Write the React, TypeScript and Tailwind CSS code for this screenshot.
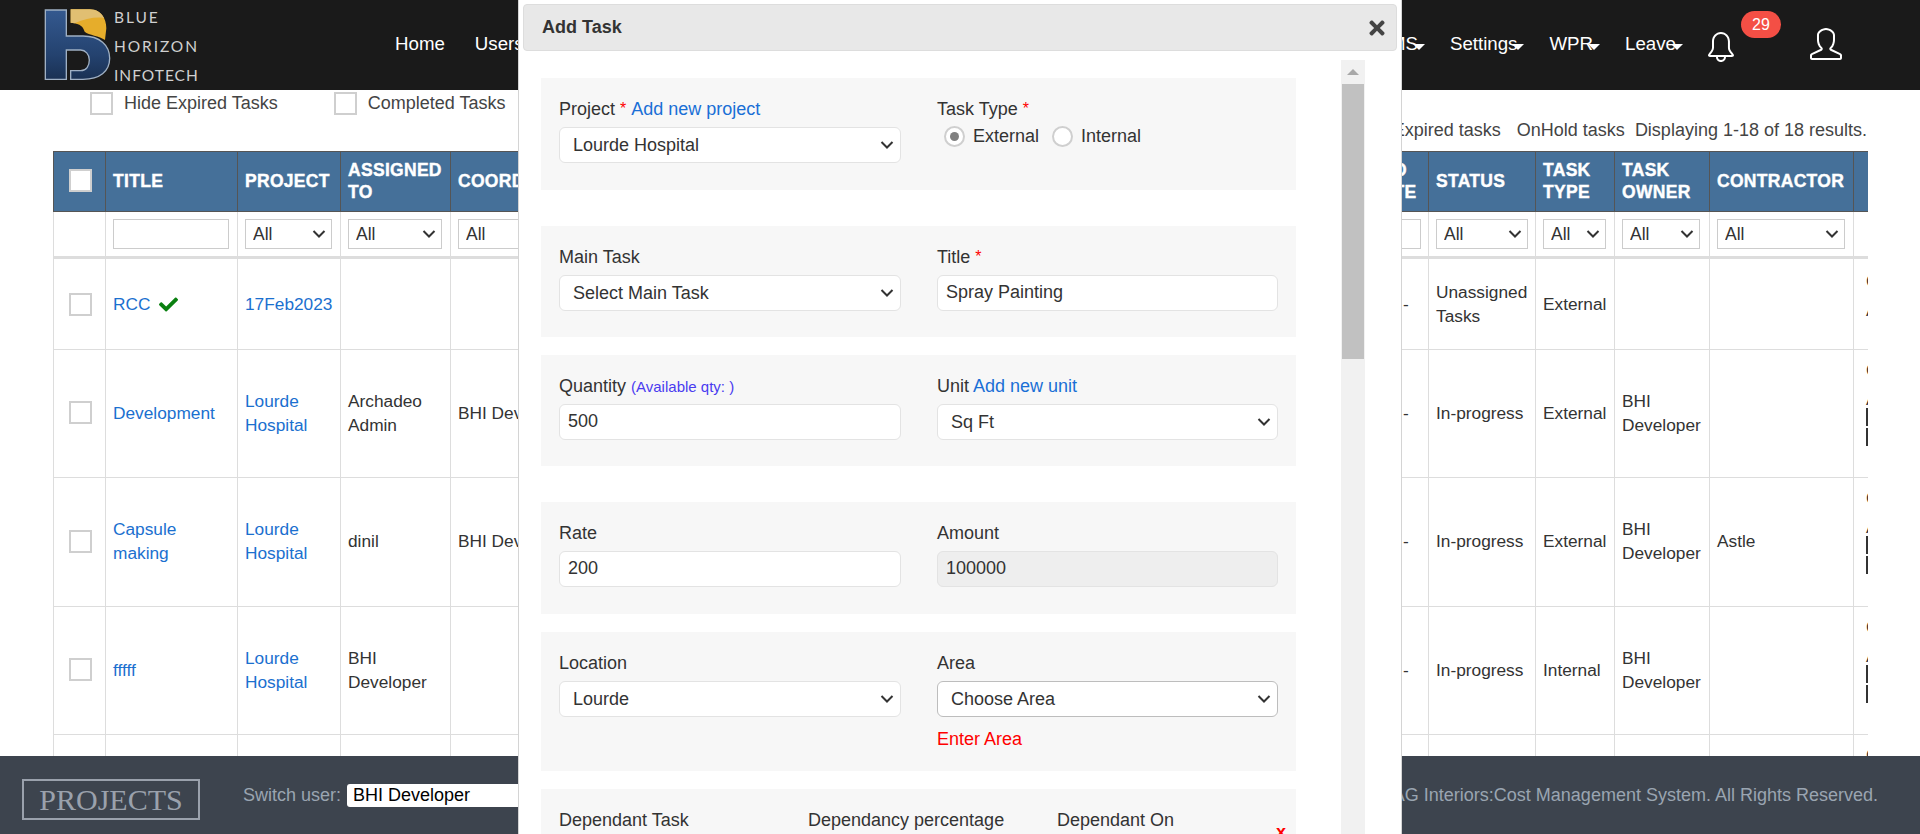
import React from "react";
import { SlBell, SlUser } from "react-icons/sl";
import { FaCheck, FaTimes } from "react-icons/fa";

const HIDDEN_NAV = ["Tasks", "Projects", "Reports", "Contractors", "Materials", "Billing", "Finance"];

const COLUMNS = [
  { label: "", width: "w-[52px]" },
  { label: "TITLE", width: "w-[132px]" },
  { label: "PROJECT", width: "w-[103px]" },
  { label: "ASSIGNED TO", width: "w-[110px]" },
  { label: "COORDINATOR", width: "w-[170px]" },
  { label: "QUANTITY", width: "w-[120px]" },
  { label: "RATE", width: "w-[100px]" },
  { label: "AMOUNT", width: "w-[121px]" },
  { label: "LOCATION", width: "w-[200px]" },
  { label: "START DATE", width: "w-[200px]" },
  { label: "END DATE", width: "w-[67px]" },
  { label: "STATUS", width: "w-[107px]" },
  { label: "TASK TYPE", width: "w-[79px]" },
  { label: "TASK OWNER", width: "w-[95px]" },
  { label: "CONTRACTOR", width: "w-[144px]" },
  { label: "", width: "w-[120px]" },
];

const ROWS = [
  { h: "h-[92px]", title: "RCC", done: true, project: "17Feb2023", assigned: "", coord: "", status: "Unassigned Tasks", type: "External", owner: "", contractor: "", buttons: false },
  { h: "h-[128px] [&>td]:pb-[2px]", title: "Development", project: "Lourde Hospital", assigned: "Archadeo Admin", coord: "BHI Developer", status: "In-progress", type: "External", owner: "BHI Developer", contractor: "", buttons: true },
  { h: "h-[129px] [&>td]:pb-[2px]", title: "Capsule making", project: "Lourde Hospital", assigned: "dinil", coord: "BHI Developer", status: "In-progress", type: "External", owner: "BHI Developer", contractor: "Astle", buttons: true },
  { h: "h-[128px] [&>td]:pb-[2px]", title: "fffff", project: "Lourde Hospital", assigned: "BHI Developer", coord: "", status: "In-progress", type: "Internal", owner: "BHI Developer", contractor: "", buttons: true },
  { h: "h-[128px] [&>td]:pb-[2px]", title: "Plumbing", project: "Lourde Hospital", assigned: "BHI Developer", coord: "", status: "In-progress", type: "External", owner: "BHI Developer", contractor: "", buttons: true },
];

const Box: React.FC = () => (
  <span className="block w-[23px] h-[23px] bg-white border-2 border-[#cfcfcf]" />
);

const Chevron: React.FC<{ className: string }> = ({ className }) => (
  <svg width="14" height="9" viewBox="0 0 14 9" fill="none" className={`absolute top-1/2 -translate-y-1/2 pointer-events-none ${className}`}>
    <path d="M1.5 1.5 L7 7 L12.5 1.5" stroke="#333" strokeWidth="2" />
  </svg>
);

const NavItem: React.FC<{ label: string; caret?: boolean }> = ({ label, caret }) => (
  <span className="flex items-center text-[18.7px] text-white whitespace-nowrap">
    {label}
    {caret && <span className="block -ml-[5px] mt-[6px] w-0 h-0 border-x-[6px] border-x-transparent border-t-[6px] border-t-white" />}
  </span>
);

const Logo: React.FC = () => (
  <div className="flex items-center ml-[43px] w-[162px] shrink-0">
    <svg width="70" height="74" viewBox="125 24 210 222" className="shrink-0">
      <defs>
        <linearGradient id="logoBlue" x1="0" y1="0" x2="0" y2="1">
          <stop offset="0" stopColor="#34598f" />
          <stop offset="0.65" stopColor="#24426f" />
          <stop offset="1" stopColor="#1a3153" />
        </linearGradient>
      </defs>
      <path
        d="M132 30 H195 V108 H245 C295 108 325 135 325 175 C325 215 295 238 245 238 H208 V212 H238 C255 212 264 198 264 180 C264 163 252 150 238 150 H195 V238 H132 Z"
        fill="url(#logoBlue)"
        stroke="#9fb0c4"
        strokeWidth="4"
      />
      <path d="M208 28 H265 C298 28 315 55 315 85 L311 120 C295 108 262 105 250 95 C245 80 240 72 208 68 Z" fill="#e6ad2b" />
      <path d="M208 28 H265 C285 28 300 38 308 54 C285 50 250 56 220 70 L208 68 Z" fill="#e1bf72" />
    </svg>
    <div className="ml-[1px] mt-[2px] flex flex-col font-['Lato',sans-serif] text-[15.5px] leading-[29px] tracking-[1.9px] text-[#d0d0d0]">
      <span>BLUE</span>
      <span>HORIZON</span>
      <span className="tracking-[1px]">INFOTECH</span>
    </div>
  </div>
);

const Header: React.FC = () => (
  <header className="h-[90px] shrink-0 bg-[#1a1a1a] flex items-center">
    <Logo />
    <nav className="flex items-center gap-[30px] ml-[190px] pb-[2px]">
      <NavItem label="Home" />
      <NavItem label="Users" caret />
      {HIDDEN_NAV.map((n) => (
        <NavItem key={n} label={n} caret />
      ))}
    </nav>
    <div className="ml-auto flex items-center pr-[78px]">
      <div className="flex items-center gap-[25px] pb-[2px]">
        <NavItem label="CMS" caret />
        <NavItem label="Settings" caret />
        <NavItem label="WPR" caret />
        <NavItem label="Leave" caret />
      </div>
      <div className="relative ml-[23px] mt-[4px]">
        <SlBell size={30} color="#fff" />
        <span className="absolute -top-[21px] left-[35px] w-[40px] h-[27px] rounded-[14px] bg-[#f44f45] text-white text-[16px] flex items-center justify-center">
          29
        </span>
      </div>
      <SlUser size={32} color="#fff" className="ml-[74px] -mt-[3px]" />
    </div>
  </header>
);

const Toolbar: React.FC = () => (
  <div className="h-[61px] text-[#444]">
    <div className="h-[26px] flex items-center pl-[90px]">
      <Box />
      <span className="ml-[11px]">Hide Expired Tasks</span>
      <span className="ml-[56px]"><Box /></span>
      <span className="ml-[11px]">Completed Tasks</span>
    </div>
    <div className="h-[28px] flex items-center justify-end pr-[53px]">
      <span>Expired tasks</span>
      <span className="ml-[16px]">OnHold tasks</span>
      <span className="ml-[10px]">Displaying 1-18 of 18 results.</span>
    </div>
  </div>
);

const FilterSelect: React.FC<{ className: string }> = ({ className }) => (
  <span className={`relative block ${className}`}>
    <select className="appearance-none block w-full h-[30px] border border-[#ccc] bg-white pl-[7px] text-[#333] text-[17.5px]">
      <option>All</option>
    </select>
    <Chevron className="right-[6px]" />
  </span>
);

const FILTER_WIDTHS: Record<string, string> = {
  PROJECT: "w-[87px]",
  "ASSIGNED TO": "w-[94px]",
  COORDINATOR: "w-[150px]",
  STATUS: "w-[92px]",
  "TASK TYPE": "w-[63px]",
  "TASK OWNER": "w-[78px]",
  CONTRACTOR: "w-[128px]",
};

const ActionsCell: React.FC<{ buttons: boolean }> = ({ buttons }) => (
  <div className={`flex flex-col items-start leading-[29px] text-[#333] ${buttons ? "" : "mt-[2px]"}`}>
    <span>Copy</span>
    <span>Assign</span>
    {buttons && (
      <>
        <span className="block border-2 border-[#333] h-[18px] w-[60px] -mt-[6px]" />
        <span className="block border-2 border-[#333] h-[18px] w-[60px] mt-[2px]" />
      </>
    )}
  </div>
);

const TaskTable: React.FC = () => (
  <div className="ml-[53px] w-[1815px] overflow-hidden">
    <table className="table-fixed border-collapse w-[1920px] text-[17.3px]">
      <colgroup>
        {COLUMNS.map((c, i) => (
          <col key={i} className={c.width} />
        ))}
      </colgroup>
      <thead>
        <tr className="h-[60px] bg-[#457099] text-white">
          {COLUMNS.map((c, i) => (
            <th key={i} className="border border-[#555] px-[7px] pb-[2px] text-left text-[17.5px] font-bold leading-[22px] tracking-[0.3px] [-webkit-text-stroke:0.4px_white]">
              {i === 0 ? <span className="ml-[8px] block w-fit"><Box /></span> : c.label}
            </th>
          ))}
        </tr>
        <tr className="h-[46px]">
          {COLUMNS.map((c, i) => (
            <td key={i} className="border border-[#ddd] border-b-[3px] px-[7px]">
              {c.label === "TITLE" && <input className="w-[116px] h-[30px] border border-[#ccc]" />}
              {c.label === "END DATE" && <input className="w-[52px] h-[30px] border border-[#ccc]" />}
              {FILTER_WIDTHS[c.label] && <FilterSelect className={FILTER_WIDTHS[c.label]} />}
            </td>
          ))}
        </tr>
      </thead>
      <tbody className="text-[#333] leading-[24px]">
        {ROWS.map((r, i) => (
          <tr key={i} className={r.h}>
            <td className="border border-[#ddd]">
              <span className="ml-[15px] block w-fit"><Box /></span>
            </td>
            <td className="border border-[#ddd] px-[7px] text-[#1b70cf]">
              <span className="flex items-center gap-[9px] flex-wrap">
                <span className="max-w-[90px]">{r.title}</span>
                {r.done && <FaCheck size={19} color="#0a8010" />}
              </span>
            </td>
            <td className="border border-[#ddd] px-[7px] text-[#1b70cf]">{r.project}</td>
            <td className="border border-[#ddd] px-[7px]">{r.assigned}</td>
            <td className="border border-[#ddd] px-[7px]">{r.coord}</td>
            <td className="border border-[#ddd]" />
            <td className="border border-[#ddd]" />
            <td className="border border-[#ddd]" />
            <td className="border border-[#ddd]" />
            <td className="border border-[#ddd]" />
            <td className="border border-[#ddd] pl-[41px]">-</td>
            <td className="border border-[#ddd] px-[7px]">{r.status}</td>
            <td className="border border-[#ddd] px-[7px]">{r.type}</td>
            <td className="border border-[#ddd] px-[7px]">{r.owner}</td>
            <td className="border border-[#ddd] px-[7px]">{r.contractor}</td>
            <td className="border border-[#ddd] pl-[12px] pt-[6px] align-top">
              <ActionsCell buttons={r.buttons} />
            </td>
          </tr>
        ))}
      </tbody>
    </table>
  </div>
);

const Footer: React.FC = () => (
  <footer className="h-[78px] shrink-0 bg-[#3d444e] flex items-center pl-[22px] pr-[42px] text-[#9aa5b1]">
    <span className="h-[41px] w-[178px] border-2 border-[#9aa1ac] flex items-center justify-center font-['Liberation_Serif',serif] text-[30px] text-[#9aa1ac] mt-[9px]">
      PROJECTS
    </span>
    <span className="ml-[43px]">Switch user:</span>
    <select className="ml-[6px] pl-[2px] w-[189px] h-[23px] bg-white text-black rounded-[3px]">
      <option>BHI Developer</option>
    </select>
    <span className="ml-auto">© 2023 AG Interiors:Cost Management System. All Rights Reserved.</span>
  </footer>
);

const Req: React.FC = () => <span className="ml-[5px] mr-[1px] text-[#f00] text-[16px] align-top">*</span>;
const AddLink: React.FC<{ children: React.ReactNode }> = ({ children }) => (
  <span className="text-[#1a6fd6]">{children}</span>
);

const Label: React.FC<{ children: React.ReactNode }> = ({ children }) => (
  <label className="block h-[24px] leading-[24px] mb-[6px] text-[#333]">{children}</label>
);

const FIELD = "block w-full h-[36px] rounded-[6px] border text-[#333]";

const SelectField: React.FC<{ value: string; strong?: boolean }> = ({ value, strong }) => (
  <span className="relative block">
    <select className={`appearance-none ${FIELD} bg-white pl-[13px] ${strong ? "border-[#bdbdbd]" : "border-[#e3e3e3]"}`}>
      <option>{value}</option>
    </select>
    <Chevron className="right-[7px]" />
  </span>
);

const TextField: React.FC<{ value: string; disabled?: boolean }> = ({ value, disabled }) => (
  <input
    readOnly
    defaultValue={value}
    className={`${FIELD} px-[8px] pb-[2px] border-[#e3e3e3] ${disabled ? "bg-[#eee]" : "bg-white"}`}
  />
);

const Section: React.FC<{ className: string; children: React.ReactNode }> = ({ className, children }) => (
  <section className={`${className} bg-[#f7f7f7] px-[18px] pt-[19px] grid grid-cols-[342px_341px] gap-x-[36px] content-start`}>
    {children}
  </section>
);

const Radio: React.FC<{ checked?: boolean; label: string }> = ({ checked, label }) => (
  <span className="flex items-center">
    <span className="w-[21px] h-[21px] rounded-full bg-white border-2 border-[#cfcfcf] flex items-center justify-center">
      {checked && <span className="w-[9px] h-[9px] rounded-full bg-[#808080]" />}
    </span>
    <span className="ml-[8px] text-[#333]">{label}</span>
  </span>
);

const TaskModal: React.FC = () => (
  <div className="absolute top-0 left-[518px] w-[884px] h-[834px] bg-white border-x border-[#d4d4d4] overflow-hidden px-[4px] pt-[4px]">
    <div className="h-[47px] rounded-[4px] bg-[#e8e8e8] border border-[#ddd] flex items-center justify-between pl-[18px] pr-[8px]">
      <span className="font-bold text-[#333]">Add Task</span>
      <FaTimes size={22} color="#444" />
    </div>
    <div className="flex items-start">
      <div className="ml-[18px] w-[755px] shrink-0 pt-[27px] flex flex-col">
        <Section className="h-[112px]">
          <div>
            <Label>Project<Req /> <AddLink>Add new project</AddLink></Label>
            <SelectField value="Lourde Hospital" />
          </div>
          <div>
            <Label>Task Type<Req /></Label>
            <div className="flex items-center gap-[13px] pl-[7px] -mt-[4px]">
              <Radio checked label="External" />
              <Radio label="Internal" />
            </div>
          </div>
        </Section>
        <Section className="h-[111px] mt-[36px]">
          <div>
            <Label>Main Task</Label>
            <SelectField value="Select Main Task" />
          </div>
          <div>
            <Label>Title<Req /></Label>
            <TextField value="Spray Painting" />
          </div>
        </Section>
        <Section className="h-[111px] mt-[18px]">
          <div>
            <Label>Quantity <span className="text-[15px] text-[#4a3cf0]">(Available qty: )</span></Label>
            <TextField value="500" />
          </div>
          <div>
            <Label>Unit <AddLink>Add new unit</AddLink></Label>
            <SelectField value="Sq Ft" />
          </div>
        </Section>
        <Section className="h-[112px] mt-[36px]">
          <div>
            <Label>Rate</Label>
            <TextField value="200" />
          </div>
          <div>
            <Label>Amount</Label>
            <TextField value="100000" disabled />
          </div>
        </Section>
        <Section className="h-[139px] mt-[18px]">
          <div>
            <Label>Location</Label>
            <SelectField value="Lourde" />
          </div>
          <div>
            <Label>Area</Label>
            <SelectField value="Choose Area" strong />
            <p className="mt-[10px] text-[#f00] leading-[24px]">Enter Area</p>
          </div>
        </Section>
        <section className="mt-[18px] h-[120px] bg-[#f7f7f7] px-[18px] pt-[18px] flex text-[#333] relative">
          <span className="w-[249px]">Dependant Task</span>
          <span className="w-[249px]">Dependancy percentage</span>
          <span>Dependant On</span>
          <span className="absolute left-[735px] top-[30px] text-[#f00] font-bold">x</span>
        </section>
      </div>
      <div className="ml-[45px] mt-[9px] w-[24px] h-[800px] bg-[#f1f1f1] shrink-0 flex flex-col items-center">
        <span className="block mt-[9px] w-0 h-0 border-x-[6px] border-x-transparent border-b-[6px] border-b-[#a8a8a8]" />
        <span className="block mt-[9px] w-[22px] h-[275px] bg-[#c1c1c1]" />
      </div>
    </div>
  </div>
);

export default function App() {
  return (
    <div className="relative w-full h-[834px] overflow-hidden flex flex-col bg-white font-['Liberation_Sans',Arial,sans-serif] text-[18px]">
      <Header />
      <main className="flex-1 overflow-hidden">
        <Toolbar />
        <TaskTable />
      </main>
      <Footer />
      <TaskModal />
    </div>
  );
}
